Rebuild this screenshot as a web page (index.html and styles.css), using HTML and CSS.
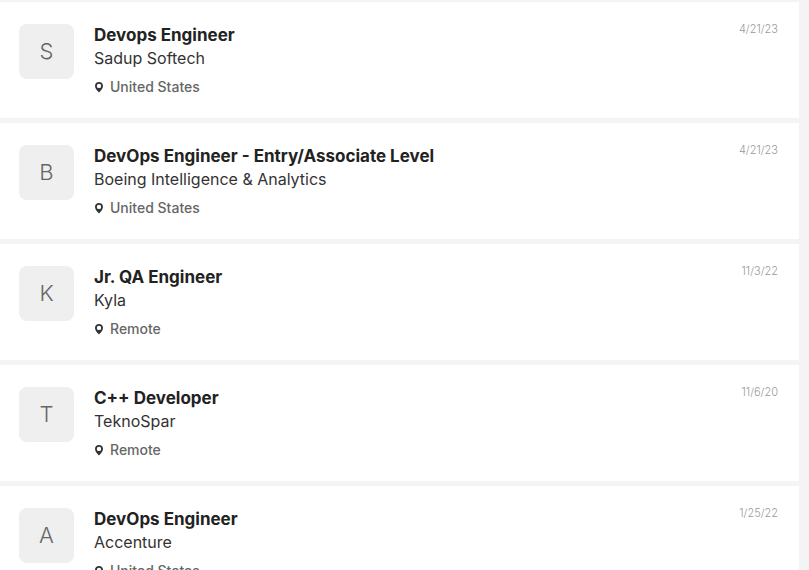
FILE: index.html
```html
<!DOCTYPE html>
<html lang="en">
<head>
    <meta charset="UTF-8">
    <meta name="viewport" content="width=device-width, initial-scale=1.0">
    <title>Jobs</title>
    <link rel="stylesheet" href="styles.css">
</head>
<body>
    <!-- Shared pin icon -->
    <svg class="icon-defs" aria-hidden="true">
        <symbol id="pin" viewBox="0 0 10 12">
            <path fill-rule="evenodd" d="M5 1C2.700 1 1 2.700 1 4.900C1 7.200 3.200 9.500 5 11.500C6.800 9.500 9 7.200 9 4.900C9 2.700 7.300 1 5 1ZM5 2.700A2.200 2.200 0 1 1 5 7.100A2.200 2.200 0 1 1 5 2.700Z"/>
        </symbol>
    </svg>

    <main class="job-list">
        <article class="job">
            <div class="logo">S</div>
            <div class="details">
                <h2 class="title">Devops Engineer</h2>
                <p class="company">Sadup Softech</p>
                <p class="location"><svg class="pin"><use href="#pin"/></svg>United States</p>
            </div>
            <time class="date">4/21/23</time>
        </article>

        <article class="job">
            <div class="logo">B</div>
            <div class="details">
                <h2 class="title">DevOps Engineer - Entry/Associate Level</h2>
                <p class="company">Boeing Intelligence &amp; Analytics</p>
                <p class="location"><svg class="pin"><use href="#pin"/></svg>United States</p>
            </div>
            <time class="date">4/21/23</time>
        </article>

        <article class="job">
            <div class="logo">K</div>
            <div class="details">
                <h2 class="title">Jr. QA Engineer</h2>
                <p class="company">Kyla</p>
                <p class="location"><svg class="pin"><use href="#pin"/></svg>Remote</p>
            </div>
            <time class="date">11/3/22</time>
        </article>

        <article class="job">
            <div class="logo">T</div>
            <div class="details">
                <h2 class="title">C++ Developer</h2>
                <p class="company">TeknoSpar</p>
                <p class="location"><svg class="pin"><use href="#pin"/></svg>Remote</p>
            </div>
            <time class="date">11/6/20</time>
        </article>

        <article class="job">
            <div class="logo">A</div>
            <div class="details">
                <h2 class="title">DevOps Engineer</h2>
                <p class="company">Accenture</p>
                <p class="location"><svg class="pin"><use href="#pin"/></svg>United States</p>
            </div>
            <time class="date">1/25/22</time>
        </article>
    </main>
</body>
</html>
```
FILE: styles.css
```css
body {
    font-family: Inter, 'Liberation Sans', sans-serif;
    margin: 0;
    background: #f4f4f4;
    color: #222;
}

.icon-defs {
    display: none;
}

.job-list {
    display: flex;
    flex-direction: column;
    gap: 5px;
    padding: 2px 10px 0 0;
}

.job {
    display: flex;
    align-items: flex-start;
    gap: 20px;
    padding: 22px 21px 20px 19px;
    background: #fff;
}

.logo {
    flex-shrink: 0;
    width: 55px;
    height: 55px;
    border-radius: 8px;
    background: #efefef;
    color: #666;
    font-size: 22px;
    font-weight: 300;
    line-height: 54px;
    text-align: center;
}

.details {
    flex: 1;
}

.title {
    margin: 0;
    font-size: 17px;
    font-weight: 700;
    line-height: 22px;
}

.company {
    margin: 0;
    color: #333;
    font-size: 16px;
    line-height: 24px;
}

.location {
    display: flex;
    align-items: center;
    gap: 6px;
    margin: 6px 0 0;
    color: #666;
    font-size: 14px;
    font-weight: 500;
    line-height: 22px;
}

.pin {
    width: 10px;
    height: 12px;
    fill: #333;
}

.date {
    color: #999;
    font-size: 11px;
    font-weight: 300;
    line-height: 10px;
}
```
